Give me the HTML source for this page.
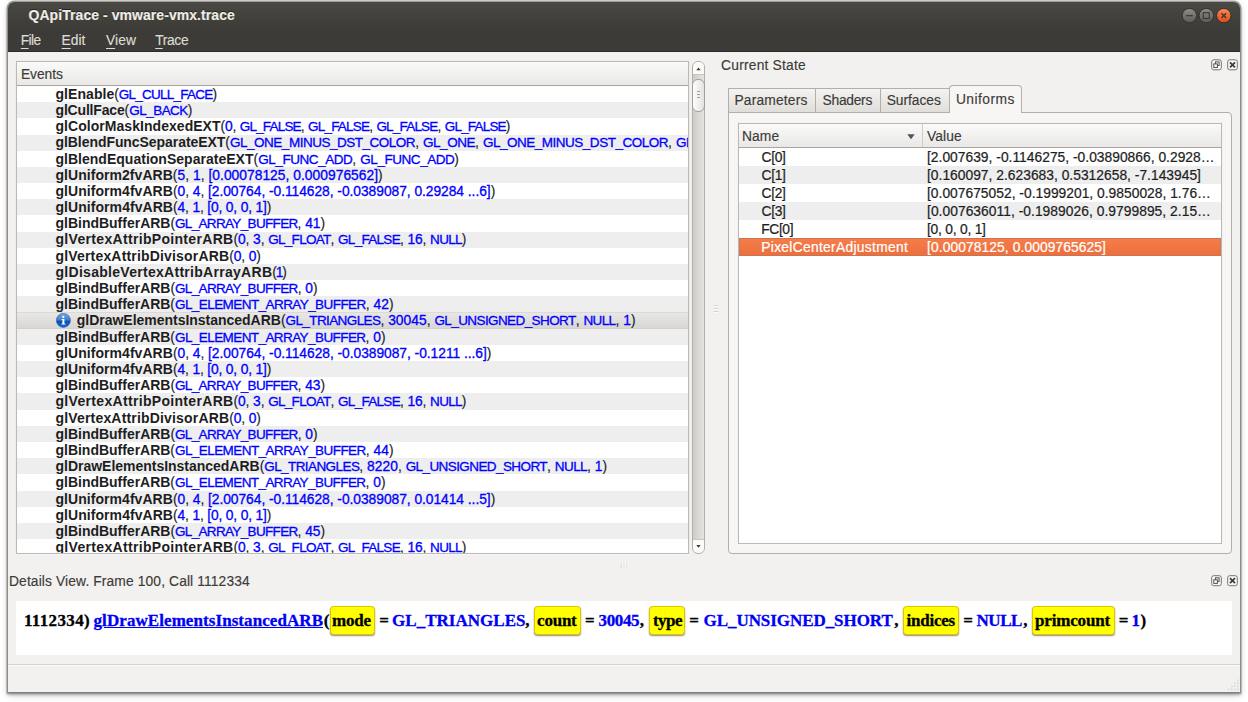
<!DOCTYPE html>
<html lang="en">
<head>
<meta charset="utf-8">
<title>QApiTrace - vmware-vmx.trace</title>
<style>
*{box-sizing:border-box;margin:0;padding:0}
html,body{width:1248px;height:702px;background:#fff;overflow:hidden}
body{position:relative;font-family:"Liberation Sans",sans-serif;font-size:13.3px;color:#3c3b37}
.abs{position:absolute}
#win{position:absolute;left:7.8px;top:2.3px;width:1232.7px;height:689.3px;background:#f2f1f0;border-radius:6px 6px 0 0;
 box-shadow:0 0 0 1.4px rgba(110,108,105,.62),0 2px 3px .5px rgba(0,0,0,.3),0 3px 8px rgba(0,0,0,.16);overflow:hidden}
#tbar{position:absolute;left:0;top:0;width:100%;height:49.7px;background:linear-gradient(#4a4943 0,#403f3a 20px,#3c3b37 27px,#3c3b37 100%);border-bottom:1px solid #2b2a27}
/* labels */
.L{position:absolute;white-space:nowrap;line-height:16px;font-size:13.8px;color:#3c3b37}
.L.tt{font-weight:bold;font-size:14px;color:#efece6;text-shadow:0 -1px 0 rgba(0,0,0,.5);-webkit-text-stroke:.15px currentColor}
.L.mn{font-size:13.8px;color:#dfdbd2}
.L.mn u{text-decoration:underline;text-underline-offset:3.2px;text-decoration-thickness:1px}
.L.tx{color:#1e1e1e}
.L.ui,.L.mn,.ar{-webkit-text-stroke:.15px currentColor}
.L.tx{-webkit-text-stroke:.22px currentColor}
.ar b{-webkit-text-stroke:.3px #0000ff}
.L.w{color:#fff}
.L.sf{font-family:"Liberation Serif",serif;font-weight:bold;font-size:17px;color:#000;line-height:20px}
.L.sf{-webkit-text-stroke:.3px currentColor}
.L.lk{color:#0000f4;text-decoration:underline}
.L.bl{color:#0000f4}
/* events tree */
#tree{position:absolute;left:16px;top:61px;width:673px;height:493px;border:1px solid #bcb8b3;box-shadow:0 0 1px rgba(120,115,108,.15),0 1px 0 rgba(255,255,255,.7);background:#fff;overflow:hidden}
#thead{position:absolute;left:0;top:0;width:100%;height:24px;background:linear-gradient(#fafafa,#e9e8e6);border-bottom:1px solid #a9a59e}
#tbody{position:absolute;left:0;top:0;width:671px;height:491px}
.r{position:absolute;left:0;width:671px;height:16.18px;background:#fff}
.rt{position:absolute;white-space:nowrap;color:#1e1e1e;font-size:13.8px;line-height:16px}
.r.alt{background:#eeeeee}
.r.sel{margin-top:-.5px;height:16.8px;background:linear-gradient(#e9e8e7,#d8d6d3);box-shadow:inset 0 1px 0 #dcdad7,inset 0 -1px 0 #d3d1cd}
.info{position:absolute}
.fn{font-weight:bold;font-size:14px}
.ar b{font-weight:normal;color:#0000ff}
.ar b.c{font-size:13.5px}
/* scrollbar */
#sb{position:absolute;left:692px;top:61px;width:13px;height:493px;border:1px solid #b3afa8;border-radius:6px;background:linear-gradient(90deg,#cfccc8,#e6e4e1);overflow:hidden}
#sb .up{position:absolute;left:0;top:0;width:100%;height:13px;background:#fbfbfa;border-bottom:1px solid #c9c6c1}
#sb .dn{position:absolute;left:0;bottom:0;width:100%;height:14px;background:#fbfbfa;border-top:1px solid #c9c6c1}
#thumb{position:absolute;left:692px;top:79px;width:13px;height:33px;border:1px solid #a39f98;border-radius:6px;background:linear-gradient(90deg,#fdfdfd,#e4e2df)}
/* right dock */
#tabpane{position:absolute;left:728px;top:112px;width:504px;height:442px;border:1px solid #b3afa8;border-radius:0 4px 4px 4px;background:#f7f6f5}
.tab{position:absolute;top:88px;height:25px;border:1px solid #b3afa8;background:linear-gradient(#f4f3f2,#e0deda)}
.tab.act{top:85px;height:28px;background:#f7f6f5;border-bottom:none;border-radius:4px 4px 0 0}
#utable{position:absolute;left:738px;top:123px;width:484px;height:421px;border:1px solid #bcb8b3;box-shadow:0 0 1px rgba(120,115,108,.15),0 1px 0 rgba(255,255,255,.7);background:#fff;overflow:hidden}
#uhead{position:absolute;left:0;top:0;width:100%;height:24px;background:linear-gradient(#fafafa,#e9e8e6);border-bottom:1px solid #a9a59e}
.u{position:absolute;left:0;width:482px;height:18.2px;background:#fff}
.u.alt{background:#eeeeee}
.u.usel{background:linear-gradient(#f57e4b,#ec6e3c);box-shadow:inset 0 1px 0 #ee6a35,inset 0 -1px 0 #ee6a35;outline:1px dotted rgba(135,135,135,.7);outline-offset:-1px}
/* details */
#details{position:absolute;left:16px;top:601px;width:1216px;height:54px;background:#fff}
.kb{position:absolute;top:606px;height:29px;background:#ffff00;border:1px solid #e0c400;border-radius:3.5px;box-shadow:0 1px 1.5px rgba(0,0,0,.45)}
#sep{position:absolute;left:8px;top:663.6px;width:1232px;height:2px;background:linear-gradient(#d4d1cc 50%,#fcfcfb 50%)}
</style>
</head>
<body>
<div id="win">
 <div id="tbar">

 </div>
</div>

<svg class="abs" style="left:1179px;top:5px" width="56" height="22" viewBox="0 0 56 22">
   <defs>
    <linearGradient id="gb" x1="0" y1="0" x2="0" y2="1"><stop offset="0" stop-color="#908e87"/><stop offset="1" stop-color="#5c5a54"/></linearGradient>
    <linearGradient id="rb" x1="0" y1="0" x2="0" y2="1"><stop offset="0" stop-color="#f68a5c"/><stop offset="1" stop-color="#df4a16"/></linearGradient>
   </defs>
   <circle cx="10.4" cy="10.6" r="7.2" fill="url(#gb)" stroke="#33322e" stroke-width="1"/>
   <rect x="7" y="10" width="6.8" height="1.3" fill="#3c3b37"/>
   <circle cx="27.3" cy="10.6" r="7.2" fill="url(#gb)" stroke="#33322e" stroke-width="1"/>
   <rect x="24.3" y="7.7" width="6" height="5.8" fill="none" stroke="#3c3b37" stroke-width="1.2"/>
   <circle cx="44.8" cy="10.6" r="7.2" fill="url(#rb)" stroke="#33322e" stroke-width="1"/>
   <path d="M42.4 8.2l4.8 4.8M47.2 8.2l-4.8 4.8" stroke="#46322b" stroke-width="1.3" fill="none"/>
  </svg>

<!-- Events tree -->
<div id="tree">
 <div id="tbody">
<div class="r" style="top:24.00px"></div>
<div class="r alt" style="top:40.18px"></div>
<div class="r" style="top:56.36px"></div>
<div class="r alt" style="top:72.54px"></div>
<div class="r" style="top:88.72px"></div>
<div class="r alt" style="top:104.90px"></div>
<div class="r" style="top:121.08px"></div>
<div class="r alt" style="top:137.26px"></div>
<div class="r" style="top:153.44px"></div>
<div class="r alt" style="top:169.62px"></div>
<div class="r" style="top:185.80px"></div>
<div class="r alt" style="top:201.98px"></div>
<div class="r" style="top:218.16px"></div>
<div class="r alt" style="top:234.34px"></div>
<div class="r sel" style="top:250.52px"></div>
<div class="r alt" style="top:266.70px"></div>
<div class="r" style="top:282.88px"></div>
<div class="r alt" style="top:299.06px"></div>
<div class="r" style="top:315.24px"></div>
<div class="r alt" style="top:331.42px"></div>
<div class="r" style="top:347.60px"></div>
<div class="r alt" style="top:363.78px"></div>
<div class="r" style="top:379.96px"></div>
<div class="r alt" style="top:396.14px"></div>
<div class="r" style="top:412.32px"></div>
<div class="r alt" style="top:428.50px"></div>
<div class="r" style="top:444.68px"></div>
<div class="r alt" style="top:460.86px"></div>
<div class="r" style="top:477.04px"></div>
<div class="rt" style="left:38.50px;top:23.76px" id="t0"><span class="fn" style="letter-spacing:0.054px">glEnable</span><span class="ar" style="letter-spacing:-0.132px">(<b class="c" style="letter-spacing:-0.752px">GL_CULL_FACE</b>)</span></div>
<div class="rt" style="left:38.50px;top:39.95px" id="t1"><span class="fn" style="letter-spacing:-0.174px">glCullFace</span><span class="ar" style="letter-spacing:0.088px">(<b class="c" style="letter-spacing:-0.532px">GL_BACK</b>)</span></div>
<div class="rt" style="left:38.50px;top:56.14px" id="t2"><span class="fn" style="letter-spacing:0.045px">glColorMaskIndexedEXT</span><span class="ar" style="letter-spacing:-0.193px">(<b>0</b>, <b class="c" style="letter-spacing:-0.813px">GL_FALSE</b>, <b class="c" style="letter-spacing:-0.813px">GL_FALSE</b>, <b class="c" style="letter-spacing:-0.813px">GL_FALSE</b>, <b class="c" style="letter-spacing:-0.813px">GL_FALSE</b>)</span></div>
<div class="rt" style="left:38.50px;top:72.34px" id="t3"><span class="fn" style="letter-spacing:-0.063px">glBlendFuncSeparateEXT</span><span class="ar" style="letter-spacing:0.135px">(<b class="c" style="letter-spacing:-0.485px">GL_ONE_MINUS_DST_COLOR</b>, <b class="c" style="letter-spacing:-0.485px">GL_ONE</b>, <b class="c" style="letter-spacing:-0.485px">GL_ONE_MINUS_DST_COLOR</b>, <b class="c" style="letter-spacing:-0.485px">GL_ONE</b>)</span></div>
<div class="rt" style="left:38.50px;top:88.53px" id="t4"><span class="fn" style="letter-spacing:0.015px">glBlendEquationSeparateEXT</span><span class="ar" style="letter-spacing:0.167px">(<b class="c" style="letter-spacing:-0.453px">GL_FUNC_ADD</b>, <b class="c" style="letter-spacing:-0.453px">GL_FUNC_ADD</b>)</span></div>
<div class="rt" style="left:38.50px;top:104.72px" id="t5"><span class="fn" style="letter-spacing:0.046px">glUniform2fvARB</span><span class="ar" style="letter-spacing:0.034px">(<b>5</b>, <b>1</b>, <b>[0.00078125, 0.000976562]</b>)</span></div>
<div class="rt" style="left:38.50px;top:120.91px" id="t6"><span class="fn" style="letter-spacing:0.051px">glUniform4fvARB</span><span class="ar" style="letter-spacing:-0.037px">(<b>0</b>, <b>4</b>, <b>[2.00764, -0.114628, -0.0389087, 0.29284 ...6]</b>)</span></div>
<div class="rt" style="left:38.50px;top:137.10px" id="t7"><span class="fn" style="letter-spacing:0.058px">glUniform4fvARB</span><span class="ar" style="letter-spacing:-0.154px">(<b>4</b>, <b>1</b>, <b>[0, 0, 0, 1]</b>)</span></div>
<div class="rt" style="left:38.50px;top:153.30px" id="t8"><span class="fn" style="letter-spacing:-0.011px">glBindBufferARB</span><span class="ar" style="letter-spacing:-0.044px">(<b class="c" style="letter-spacing:-0.664px">GL_ARRAY_BUFFER</b>, <b>41</b>)</span></div>
<div class="rt" style="left:38.50px;top:169.49px" id="t9"><span class="fn" style="letter-spacing:0.318px">glVertexAttribPointerARB</span><span class="ar" style="letter-spacing:-0.089px">(<b>0</b>, <b>3</b>, <b class="c" style="letter-spacing:-0.709px">GL_FLOAT</b>, <b class="c" style="letter-spacing:-0.709px">GL_FALSE</b>, <b>16</b>, <b class="c" style="letter-spacing:-0.709px">NULL</b>)</span></div>
<div class="rt" style="left:38.50px;top:185.68px" id="t10"><span class="fn" style="letter-spacing:0.174px">glVertexAttribDivisorARB</span><span class="ar" style="letter-spacing:-0.131px">(<b>0</b>, <b>0</b>)</span></div>
<div class="rt" style="left:38.50px;top:201.87px" id="t11"><span class="fn" style="letter-spacing:0.285px">glDisableVertexAttribArrayARB</span><span class="ar" style="letter-spacing:-1.148px">(<b>1</b>)</span></div>
<div class="rt" style="left:38.50px;top:218.06px" id="t12"><span class="fn" style="letter-spacing:-0.011px">glBindBufferARB</span><span class="ar" style="letter-spacing:-0.037px">(<b class="c" style="letter-spacing:-0.657px">GL_ARRAY_BUFFER</b>, <b>0</b>)</span></div>
<div class="rt" style="left:38.50px;top:234.26px" id="t13"><span class="fn" style="letter-spacing:-0.017px">glBindBufferARB</span><span class="ar" style="letter-spacing:0.05px">(<b class="c" style="letter-spacing:-0.570px">GL_ELEMENT_ARRAY_BUFFER</b>, <b>42</b>)</span></div>
<svg class="info" style="left:39.0px;top:251.12px" width="15" height="15" viewBox="0 0 15 15"><defs><linearGradient id="ig" x1="0" y1="0" x2="0" y2="1"><stop offset="0" stop-color="#75a8e0"/><stop offset="0.5" stop-color="#3c7dca"/><stop offset="0.52" stop-color="#0c4fad"/><stop offset="1" stop-color="#1468d8"/></linearGradient></defs><circle cx="7.4" cy="7.4" r="7" fill="url(#ig)" stroke="#1657ae" stroke-width="0.6"/><circle cx="7.3" cy="3.9" r="1.15" fill="#fff"/><path d="M5.5 5.9h2.9v4.6l1 .3v.6H5.4v-.6l1-.3V6.9l-.9-.3z" fill="#fff"/></svg><div class="rt" style="left:59.75px;top:250.45px" id="t14"><span class="fn" style="letter-spacing:-0.019px">glDrawElementsInstancedARB</span><span class="ar" style="letter-spacing:0.028px">(<b class="c" style="letter-spacing:-0.592px">GL_TRIANGLES</b>, <b>30045</b>, <b class="c" style="letter-spacing:-0.592px">GL_UNSIGNED_SHORT</b>, <b class="c" style="letter-spacing:-0.592px">NULL</b>, <b>1</b>)</span></div>
<div class="rt" style="left:38.50px;top:266.64px" id="t15"><span class="fn" style="letter-spacing:-0.016px">glBindBufferARB</span><span class="ar" style="letter-spacing:0.041px">(<b class="c" style="letter-spacing:-0.579px">GL_ELEMENT_ARRAY_BUFFER</b>, <b>0</b>)</span></div>
<div class="rt" style="left:38.50px;top:282.83px" id="t16"><span class="fn" style="letter-spacing:0.051px">glUniform4fvARB</span><span class="ar" style="letter-spacing:-0.032px">(<b>0</b>, <b>4</b>, <b>[2.00764, -0.114628, -0.0389087, -0.1211 ...6]</b>)</span></div>
<div class="rt" style="left:38.50px;top:299.02px" id="t17"><span class="fn" style="letter-spacing:0.058px">glUniform4fvARB</span><span class="ar" style="letter-spacing:-0.154px">(<b>4</b>, <b>1</b>, <b>[0, 0, 0, 1]</b>)</span></div>
<div class="rt" style="left:38.50px;top:315.22px" id="t18"><span class="fn" style="letter-spacing:-0.011px">glBindBufferARB</span><span class="ar" style="letter-spacing:-0.044px">(<b class="c" style="letter-spacing:-0.664px">GL_ARRAY_BUFFER</b>, <b>43</b>)</span></div>
<div class="rt" style="left:38.50px;top:331.41px" id="t19"><span class="fn" style="letter-spacing:0.318px">glVertexAttribPointerARB</span><span class="ar" style="letter-spacing:-0.089px">(<b>0</b>, <b>3</b>, <b class="c" style="letter-spacing:-0.709px">GL_FLOAT</b>, <b class="c" style="letter-spacing:-0.709px">GL_FALSE</b>, <b>16</b>, <b class="c" style="letter-spacing:-0.709px">NULL</b>)</span></div>
<div class="rt" style="left:38.50px;top:347.60px" id="t20"><span class="fn" style="letter-spacing:0.174px">glVertexAttribDivisorARB</span><span class="ar" style="letter-spacing:-0.131px">(<b>0</b>, <b>0</b>)</span></div>
<div class="rt" style="left:38.50px;top:363.79px" id="t21"><span class="fn" style="letter-spacing:-0.011px">glBindBufferARB</span><span class="ar" style="letter-spacing:-0.037px">(<b class="c" style="letter-spacing:-0.657px">GL_ARRAY_BUFFER</b>, <b>0</b>)</span></div>
<div class="rt" style="left:38.50px;top:379.98px" id="t22"><span class="fn" style="letter-spacing:-0.017px">glBindBufferARB</span><span class="ar" style="letter-spacing:0.05px">(<b class="c" style="letter-spacing:-0.570px">GL_ELEMENT_ARRAY_BUFFER</b>, <b>44</b>)</span></div>
<div class="rt" style="left:38.50px;top:396.18px" id="t23"><span class="fn" style="letter-spacing:-0.019px">glDrawElementsInstancedARB</span><span class="ar" style="letter-spacing:0.037px">(<b class="c" style="letter-spacing:-0.583px">GL_TRIANGLES</b>, <b>8220</b>, <b class="c" style="letter-spacing:-0.583px">GL_UNSIGNED_SHORT</b>, <b class="c" style="letter-spacing:-0.583px">NULL</b>, <b>1</b>)</span></div>
<div class="rt" style="left:38.50px;top:412.37px" id="t24"><span class="fn" style="letter-spacing:-0.016px">glBindBufferARB</span><span class="ar" style="letter-spacing:0.041px">(<b class="c" style="letter-spacing:-0.579px">GL_ELEMENT_ARRAY_BUFFER</b>, <b>0</b>)</span></div>
<div class="rt" style="left:38.50px;top:428.56px" id="t25"><span class="fn" style="letter-spacing:0.051px">glUniform4fvARB</span><span class="ar" style="letter-spacing:-0.037px">(<b>0</b>, <b>4</b>, <b>[2.00764, -0.114628, -0.0389087, 0.01414 ...5]</b>)</span></div>
<div class="rt" style="left:38.50px;top:444.75px" id="t26"><span class="fn" style="letter-spacing:0.058px">glUniform4fvARB</span><span class="ar" style="letter-spacing:-0.154px">(<b>4</b>, <b>1</b>, <b>[0, 0, 0, 1]</b>)</span></div>
<div class="rt" style="left:38.50px;top:460.94px" id="t27"><span class="fn" style="letter-spacing:-0.011px">glBindBufferARB</span><span class="ar" style="letter-spacing:-0.044px">(<b class="c" style="letter-spacing:-0.664px">GL_ARRAY_BUFFER</b>, <b>45</b>)</span></div>
<div class="rt" style="left:38.50px;top:477.14px" id="t28"><span class="fn" style="letter-spacing:0.318px">glVertexAttribPointerARB</span><span class="ar" style="letter-spacing:-0.089px">(<b>0</b>, <b>3</b>, <b class="c" style="letter-spacing:-0.709px">GL_FLOAT</b>, <b class="c" style="letter-spacing:-0.709px">GL_FALSE</b>, <b>16</b>, <b class="c" style="letter-spacing:-0.709px">NULL</b>)</span></div>
 </div>
 <div id="thead"></div>
</div>
<div id="sb"><div class="up"></div><div class="dn"></div></div>
<div id="thumb"></div>
<svg class="abs" style="left:692px;top:61px" width="13" height="493" viewBox="0 0 13 493">
 <path d="M4.3 9.3h4.4l-2.2-2.8z" fill="#3c3b37"/>
 <path d="M4.3 484h4.4l-2.2 2.8z" fill="#3c3b37"/>
 <path d="M5 30.5h3M5 33.5h3M5 36.5h3" stroke="#a5a29c" stroke-width="1"/>
</svg>

<!-- Current State dock -->
<div id="tabpane"></div>
<div class="tab" style="left:728px;width:87.5px"></div>
<div class="tab" style="left:814.5px;width:66px"></div>
<div class="tab" style="left:879.5px;width:70.5px"></div>
<div class="tab act" style="left:949px;width:73px"></div>
<div id="utable">
<div class="u" style="top:23.00px;height:19.00px"></div>
<div class="u alt" style="top:42.00px;height:18.00px"></div>
<div class="u" style="top:60.00px;height:18.00px"></div>
<div class="u alt" style="top:78.00px;height:18.00px"></div>
<div class="u" style="top:96.00px;height:18.00px"></div>
<div class="u alt usel" style="top:114.00px;height:18.00px"></div>
 <div id="uhead">
  <div class="abs" style="left:183px;top:0;width:1px;height:23px;background:#cfccc7"></div>
  <svg class="abs" style="left:168px;top:9.5px" width="8" height="6" viewBox="0 0 8 6"><path d="M0.3 0.3h7.4l-3.7 5z" fill="#55534e"/></svg>
 </div>
</div>

<!-- Details dock -->
<div id="details"></div>
<div class="kb" style="left:329.5px;width:45px"></div>
<div class="kb" style="left:534.25px;width:46.25px"></div>
<div class="kb" style="left:648.75px;width:36.25px"></div>
<div class="kb" style="left:903.25px;width:55.5px"></div>
<div class="kb" style="left:1031.75px;width:82.75px"></div>
<div id="sep"></div>

<svg width="0" height="0" style="position:absolute"><defs>
 <g id="dfloat"><rect x="0.5" y="0.5" width="9.6" height="10" rx="2" fill="#f8f8f7" stroke="#76746e"/><rect x="4.3" y="2.6" width="3.6" height="3.6" fill="none" stroke="#55534e" stroke-width="1"/><rect x="2.6" y="4.6" width="3.6" height="3.6" fill="#f8f8f7" stroke="#55534e" stroke-width="1"/></g>
 <g id="dclose"><rect x="0.5" y="0.5" width="9.6" height="10" rx="2" fill="#f8f8f7" stroke="#76746e"/><path d="M2.8 3l5 5M7.8 3l-5 5" stroke="#3c3b37" stroke-width="1.7" fill="none"/></g>
</defs></svg>
<svg class="abs" style="left:1211px;top:59px" width="28" height="12" viewBox="0 0 28 12"><use href="#dfloat" x="0.2" y="0.3"/><use href="#dclose" x="16.2" y="0.3"/></svg>
<svg class="abs" style="left:1211px;top:575px" width="28" height="12" viewBox="0 0 28 12"><use href="#dfloat" x="0.2" y="0.2"/><use href="#dclose" x="16.2" y="0.2"/></svg>
<!-- splitter grips -->
<svg class="abs" style="left:713px;top:304px" width="6" height="10" viewBox="0 0 6 10"><path d="M.9 1.7h4M.9 4.6h4M.9 7.5h4" stroke="#d3d0cc" stroke-width="1"/><path d="M.9 2.7h4M.9 5.6h4M.9 8.5h4" stroke="#fbfbfa" stroke-width="1"/></svg>
<svg class="abs" style="left:619px;top:562px" width="12" height="8" viewBox="0 0 12 8"><path d="M2.3 1.7v4.3M5.2 1.7v4.3M8.1 1.7v4.3" stroke="#d9d7d3" stroke-width="1"/><path d="M3.3 1.7v4.3M6.2 1.7v4.3M9.1 1.7v4.3" stroke="#fbfbfa" stroke-width="1"/></svg>

<svg class="abs" style="left:1228px;top:679px" width="12" height="12" viewBox="0 0 12 12" fill="#dcd9d5"><rect x="9" y="0.5" width="1.6" height="1.6"/><rect x="6" y="3.5" width="1.6" height="1.6"/><rect x="9" y="3.5" width="1.6" height="1.6"/><rect x="3" y="6.5" width="1.6" height="1.6"/><rect x="6" y="6.5" width="1.6" height="1.6"/><rect x="9" y="6.5" width="1.6" height="1.6"/><rect x="0" y="9.5" width="1.6" height="1.6"/><rect x="3" y="9.5" width="1.6" height="1.6"/><rect x="6" y="9.5" width="1.6" height="1.6"/><rect x="9" y="9.5" width="1.6" height="1.6"/></svg>
<!-- text labels -->
<span class="L tt" id="title" style="left:28.50px;top:7.21px;letter-spacing:0.060px">QApiTrace - vmware-vmx.trace</span>
<span class="L mn" id="m0" style="left:20.80px;top:33.41px;letter-spacing:-0.636px"><u>F</u>ile</span>
<span class="L mn" id="m1" style="left:61.60px;top:33.41px;letter-spacing:-0.047px"><u>E</u>dit</span>
<span class="L mn" id="m2" style="left:106.00px;top:33.41px;letter-spacing:0.136px"><u>V</u>iew</span>
<span class="L mn" id="m3" style="left:155.20px;top:33.41px;letter-spacing:-0.345px"><u>T</u>race</span>
<span class="L ui" id="ev" style="left:20.90px;top:66.75px;letter-spacing:-0.036px">Events</span>
<span class="L ui" id="cs" style="left:721.10px;top:58.00px;letter-spacing:0.210px">Current State</span>
<span class="L ui" id="tab0t" style="left:734.45px;top:92.75px;letter-spacing:0.177px">Parameters</span>
<span class="L ui" id="tab1t" style="left:822.55px;top:92.75px;letter-spacing:-0.265px">Shaders</span>
<span class="L ui" id="tab2t" style="left:886.65px;top:92.75px;letter-spacing:-0.028px">Surfaces</span>
<span class="L ui" id="tab3t" style="left:955.90px;top:91.50px;letter-spacing:0.465px">Uniforms</span>
<span class="L ui" id="uh0" style="left:742.00px;top:128.50px;letter-spacing:0.107px">Name</span>
<span class="L ui" id="uh1" style="left:927.00px;top:128.50px;letter-spacing:0.103px">Value</span>
<span class="L ui" id="dv" style="left:9.00px;top:573.75px;letter-spacing:0.124px">Details View. Frame 100, Call 1112334</span>
<span class="L tx" id="un0" style="left:761.45px;top:149.61px;letter-spacing:-0.273px">C[0]</span>
<span class="L tx" id="uv0" style="left:927.00px;top:149.61px;letter-spacing:0.021px">[2.007639, -0.1146275, -0.03890866, 0.2928…</span>
<span class="L tx" id="un1" style="left:761.45px;top:167.66px;letter-spacing:-0.273px">C[1]</span>
<span class="L tx" id="uv1" style="left:927.00px;top:167.66px;letter-spacing:0.020px">[0.160097, 2.623683, 0.5312658, -7.143945]</span>
<span class="L tx" id="un2" style="left:761.45px;top:185.72px;letter-spacing:-0.273px">C[2]</span>
<span class="L tx" id="uv2" style="left:927.00px;top:185.72px;letter-spacing:0.020px">[0.007675052, -0.1999201, 0.9850028, 1.76…</span>
<span class="L tx" id="un3" style="left:761.45px;top:203.79px;letter-spacing:-0.273px">C[3]</span>
<span class="L tx" id="uv3" style="left:927.00px;top:203.79px;letter-spacing:0.045px">[0.007636011, -0.1989026, 0.9799895, 2.15…</span>
<span class="L tx" id="un4" style="left:761.25px;top:221.85px;letter-spacing:-0.374px">FC[0]</span>
<span class="L tx" id="uv4" style="left:927.00px;top:221.85px;letter-spacing:-0.220px">[0, 0, 0, 1]</span>
<span class="L tx w" id="un5" style="left:761.25px;top:239.91px;letter-spacing:0.312px">PixelCenterAdjustment</span>
<span class="L tx w" id="uv5" style="left:927.00px;top:239.91px;letter-spacing:0.099px">[0.00078125, 0.0009765625]</span>
<span class="L sf" id="d0" style="left:23.90px;top:610.50px;letter-spacing:0.368px">1112334)</span>
<span class="L sf lk" id="d1" style="left:93.55px;top:610.50px;letter-spacing:0.073px">glDrawElementsInstancedARB</span>
<span class="L sf" id="d2" style="left:323.75px;top:610.50px">(</span>
<span class="L sf" id="d3" style="left:332.10px;top:610.50px;letter-spacing:-0.222px">mode</span>
<span class="L sf" id="d4" style="left:379.25px;top:610.50px">=</span>
<span class="L sf bl" id="d5" style="left:392.10px;top:610.50px;letter-spacing:0.014px">GL_TRIANGLES</span>
<span class="L sf" id="d6" style="left:525.20px;top:610.50px">,</span>
<span class="L sf" id="d7" style="left:537.10px;top:610.50px;letter-spacing:-0.239px">count</span>
<span class="L sf" id="d8" style="left:585.00px;top:610.50px">=</span>
<span class="L sf bl" id="d9" style="left:598.55px;top:610.50px;letter-spacing:-0.362px">30045</span>
<span class="L sf" id="d10" style="left:639.80px;top:610.50px">,</span>
<span class="L sf" id="d11" style="left:652.90px;top:610.50px;letter-spacing:-0.539px">type</span>
<span class="L sf" id="d12" style="left:689.25px;top:610.50px">=</span>
<span class="L sf bl" id="d13" style="left:703.55px;top:610.50px;letter-spacing:-0.061px">GL_UNSIGNED_SHORT</span>
<span class="L sf" id="d14" style="left:894.30px;top:610.50px">,</span>
<span class="L sf" id="d15" style="left:906.55px;top:610.50px;letter-spacing:-0.241px">indices</span>
<span class="L sf" id="d16" style="left:963.25px;top:610.50px">=</span>
<span class="L sf bl" id="d17" style="left:976.55px;top:610.50px;letter-spacing:-0.481px">NULL</span>
<span class="L sf" id="d18" style="left:1023.20px;top:610.50px">,</span>
<span class="L sf" id="d19" style="left:1035.00px;top:610.50px;letter-spacing:-0.161px">primcount</span>
<span class="L sf" id="d20" style="left:1118.75px;top:610.50px">=</span>
<span class="L sf bl" id="d21" style="left:1131.50px;top:610.50px">1</span>
<span class="L sf" id="d22" style="left:1140.50px;top:610.50px">)</span>
</body>
</html>
